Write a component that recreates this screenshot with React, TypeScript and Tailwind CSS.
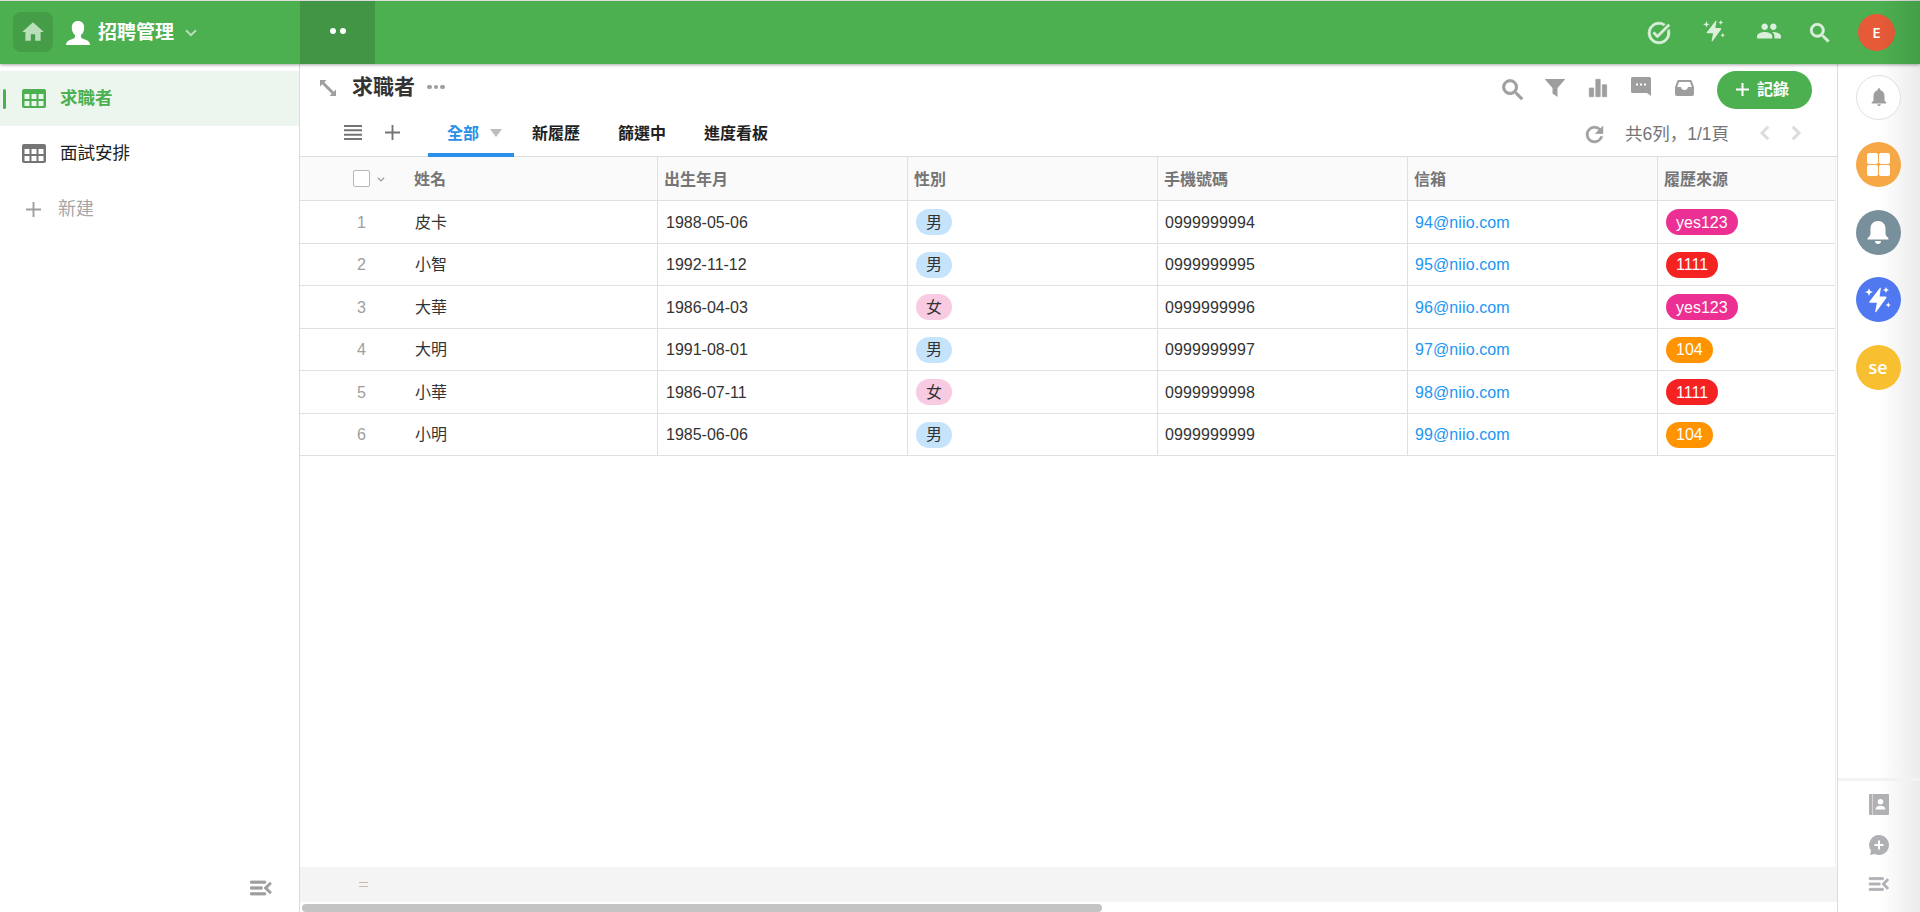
import type { ReactNode } from "react";
import clsx from "clsx";
import {
  MdChevronLeft,
  MdChevronRight,
  MdEqualizer,
  MdHome,
  MdMenuOpen,
  MdNotifications,
  MdPeople,
  MdRefresh,
  MdSearch,
  MdTaskAlt,
} from "react-icons/md";

type Row = {
  name: string;
  birth: string;
  gender: "男" | "女";
  phone: string;
  email: string;
  source: string;
};

const rows: Row[] = [
  { name: "皮卡", birth: "1988-05-06", gender: "男", phone: "0999999994", email: "94@niio.com", source: "yes123" },
  { name: "小智", birth: "1992-11-12", gender: "男", phone: "0999999995", email: "95@niio.com", source: "1111" },
  { name: "大華", birth: "1986-04-03", gender: "女", phone: "0999999996", email: "96@niio.com", source: "yes123" },
  { name: "大明", birth: "1991-08-01", gender: "男", phone: "0999999997", email: "97@niio.com", source: "104" },
  { name: "小華", birth: "1986-07-11", gender: "女", phone: "0999999998", email: "98@niio.com", source: "1111" },
  { name: "小明", birth: "1985-06-06", gender: "男", phone: "0999999999", email: "99@niio.com", source: "104" },
];

const sourceColor: Record<string, string> = {
  yes123: "bg-[#ec2f92]",
  "1111": "bg-[#f52222]",
  "104": "bg-[#ff9300]",
};

const columns = ["出生年月", "性別", "手機號碼", "信箱", "履歷來源"];

// thickens only the visible shape, the icons start with an empty bounding path
const heavy = "[&>path:last-child]:stroke-current [&>path:last-child]:stroke-[0.7]";

function Chevron({ className }: { className?: string }) {
  return (
    <svg viewBox="0 0 12 8" className={className} fill="none" stroke="currentColor" strokeWidth="2">
      <path d="M1 1.2l5 5 5-5" />
    </svg>
  );
}

function PlusIcon({ className }: { className?: string }) {
  return (
    <svg viewBox="0 0 16 16" className={className} fill="none" stroke="currentColor" strokeWidth="2">
      <path d="M8 0v16M0 8h16" />
    </svg>
  );
}

function TableIcon({ className }: { className?: string }) {
  return (
    <svg viewBox="0 0 24 19" className={clsx("h-[19px] w-6", className)} fill="currentColor" fillRule="evenodd">
      <path d="M2 0h20a2 2 0 0 1 2 2v15a2 2 0 0 1-2 2H2a2 2 0 0 1-2-2V2a2 2 0 0 1 2-2zM2.500 5v5h5V5zM9.500 5v5h5V5zM16.500 5v5h5V5zM2.500 12v5h5v-5zM9.500 12v5h5v-5zM16.500 12v5h5v-5z" />
    </svg>
  );
}

function BoltIcon({ className }: { className?: string }) {
  return (
    <svg viewBox="0 0 26 26" className={className} fill="currentColor">
      <path d="M15 .8c.5-.4 1 0 .8.6L14.600 9.600h6c.8 0 1.200.9.7 1.500L11.200 25c-.5.600-1.200.200-1-.500l1.700-8.700H5.200c-.8 0-1.200-.8-.7-1.400z" />
      <path d="M4 1.200l1.100 2.800 2.800 1.100-2.800 1.100L4 9 2.900 6.200.1 5.100 2.900 4zM21 0l.9 2.100 2.100.9-2.100.9L21 6l-.9-2.100L18 3l2.100-.9zM23.300 15.200l.8 2 1.900.8-1.900.8-.8 2-.8-2-1.900-.8 1.900-.8z" />
    </svg>
  );
}

function Header() {
  return (
    <header className="relative z-10 flex h-16 shrink-0 items-stretch border-t border-[#dcdcdc] bg-[#4caf50] text-white shadow-[0_1px_3px_rgba(0,0,0,0.35)]">
      <div className="flex w-[300px] items-center pl-[13px]">
        <button className="mb-px flex size-10 items-center justify-center rounded-lg bg-[#459d48] text-[#b9dfba]">
          <MdHome className="size-[26px]" />
        </button>
        <svg viewBox="0 0 24 24" className="ml-[13px] size-6" fill="currentColor">
          <path d="M12 0c3.800 0 6.200 2.500 6.200 6.500 0 3.300-1.200 6.200-3.200 7.500v2c.2 1.300 2 1.800 4.500 2.700 2.800 1 4.500 2.300 4.500 5.300H0c0-3 1.700-4.300 4.500-5.300C7 17.800 8.800 17.300 9 16v-2c-2-1.300-3.200-4.200-3.200-7.500C5.800 2.500 8.200 0 12 0z" />
        </svg>
        <span className="ml-2 text-[19px] leading-none font-bold">招聘管理</span>
        <Chevron className="ml-[11px] h-2 w-3 text-[#b9dfba]" />
      </div>
      <div className="flex w-[75px] items-center justify-center gap-1 bg-[#439546] pb-[3px]">
        <i className="size-1.5 rounded-full bg-white" />
        <i className="size-1.5 rounded-full bg-white" />
      </div>
      <div className="ml-auto flex items-center text-[#dbefdc]">
        <MdTaskAlt className={clsx("mr-[31px] size-[26px]", heavy)} />
        <BoltIcon className="mr-[31px] mb-1 size-[22px]" />
        <MdPeople className="mr-[25px] mb-[3px] size-[26px]" />
        <MdSearch className={clsx("mr-[25px] size-[26px]", heavy)} />
      </div>
      <div className="mr-[25px] flex size-[37px] items-center justify-center self-center rounded-full bg-[#e65a38] font-['Open_Sans',sans-serif] text-[15px] font-semibold">
        E
      </div>
    </header>
  );
}

function Sidebar() {
  return (
    <aside className="flex w-[300px] shrink-0 flex-col border-r border-[#dcdcdc] pt-[7px] text-[17.5px]">
      <div className="flex h-[55px] items-center bg-[#edf6ee] pl-[3px] font-bold text-[#4caf50]">
        <i className="h-5 w-[3px] rounded-full bg-[#4caf50]" />
        <TableIcon className="mr-3.5 ml-4" />
        <span>求職者</span>
      </div>
      <div className="flex h-[55px] items-center pl-[22px] text-[#212121]">
        <TableIcon className="mr-3.5 text-[#757575]" />
        <span>面試安排</span>
      </div>
      <div className="flex h-[55px] items-center pt-0.5 pl-[26px] text-[18px] text-[#a6a6a6]">
        <PlusIcon className="mr-[17px] size-[15px] text-[#9e9e9e]" />
        <span>新建</span>
      </div>
      <MdMenuOpen className={clsx("mt-auto mr-6 mb-2.5 size-7 self-end text-[#9e9e9e]", heavy)} />
    </aside>
  );
}

function TitleBar() {
  return (
    <div className="flex h-[48px] items-center pl-5 text-[#9e9e9e]">
      <svg viewBox="0 0 16 16" className="size-4" fill="currentColor">
        <path d="M0 0h6.500L4.300 2.200l9.500 9.500L16 9.500V16H9.500l2.200-2.200L2.200 4.300 0 6.500z" />
      </svg>
      <h1 className="ml-4 pb-1 text-[21px] leading-none font-bold text-[#333]">求職者</h1>
      <div className="mb-0.5 ml-3 flex gap-0.5">
        <i className="size-[4.500px] rounded-full bg-[#9e9e9e]" />
        <i className="size-[4.500px] rounded-full bg-[#9e9e9e]" />
        <i className="size-[4.500px] rounded-full bg-[#9e9e9e]" />
      </div>
      <div className="mr-[23px] ml-auto flex items-center">
        <MdSearch className={clsx("mt-1 mr-[18px] size-7", heavy)} />
        <svg viewBox="0 0 20 18" className="mr-5 h-[18px] w-5" fill="currentColor">
          <path d="M.5 0h19c.5 0 .6.500.3.800L12.500 9v9L7.500 14.500V9L.2.800C-.1.500 0 0 .5 0z" />
        </svg>
        <MdEqualizer className={clsx("mr-5 size-[26px]", heavy)} />
        <svg viewBox="0 0 20 19" className="mr-6 mb-1 h-[19px] w-5" fill="currentColor" fillRule="evenodd">
          <path d="M1.500 0h17A1.500 1.500 0 0 1 20 1.500V19l-4-3H1.500A1.500 1.500 0 0 1 0 14.500v-13A1.500 1.500 0 0 1 1.500 0zM5 6.500v2h2v-2zM9 6.500v2h2v-2zM13 6.500v2h2v-2z" />
        </svg>
        <svg viewBox="0 0 19 16" className="h-4 w-[19px]" fill="currentColor" fillRule="evenodd">
          <path d="M4 0h11c1 0 1.600.500 1.900 1.300L19 7v7a2 2 0 0 1-2 2H2a2 2 0 0 1-2-2V7l2.100-5.700C2.400.500 3 0 4 0zM4 2L2.200 7H6c.3 1.800 1.700 3 3.500 3S12.700 8.800 13 7h3.800L15 2z" />
        </svg>
      </div>
      <button className="mt-1 mr-[25px] flex h-[38px] w-[95px] items-center justify-center rounded-full bg-[#4caf50] pr-1 text-base font-bold text-white">
        <PlusIcon className="mr-2 mb-px size-[13px] stroke-[2.5]" />
        記錄
      </button>
    </div>
  );
}

function ViewTabs() {
  return (
    <div className="flex h-[45px] items-stretch border-b border-[#dedede] text-base font-bold text-[#212121]">
      <div className="flex items-center pb-[3px] pl-11 text-[#757575]">
        <svg viewBox="0 0 18 15" className="h-[15px] w-[18px]" stroke="currentColor" strokeWidth="2">
          <path d="M0 1h18M0 5.300h18M0 9.700h18M0 14h18" />
        </svg>
        <PlusIcon className="mr-7 ml-[23px] size-[15px]" />
      </div>
      <div className="-mb-px flex w-[86px] items-center border-b-4 border-[#2a8fe8] pt-0.5 pl-[19px] text-[#2a8fe8]">
        全部
        <svg viewBox="0 0 12 8" className="mb-0.5 ml-[11px] h-2 w-3" fill="#bdbdbd">
          <path d="M0 0h12L6 8z" />
        </svg>
      </div>
      <div className="flex items-center gap-[38px] pb-px pl-[18px]">
        <span>新履歷</span>
        <span>篩選中</span>
        <span>進度看板</span>
      </div>
      <div className="mr-[27px] ml-auto flex items-center font-normal text-[#757575]">
        <MdRefresh className={clsx("mr-[18px] size-[25px] text-[#9e9e9e]", heavy)} />
        <span className="pt-px font-['Liberation_Sans','Noto_Sans_CJK_SC',sans-serif] text-[17.500px]">
          共6列，1/1頁
        </span>
        <MdChevronLeft className={clsx("mb-[3px] ml-[22px] size-7 text-[#dcdcdc]", heavy)} />
        <MdChevronRight className={clsx("mb-[3px] ml-[3px] size-7 text-[#dcdcdc]", heavy)} />
      </div>
    </div>
  );
}

function Cell({ children, className }: { children: ReactNode; className?: string }) {
  return <div className={clsx("flex items-center border-l border-[#e0e0e0]", className)}>{children}</div>;
}

const grid = "grid grid-cols-[357px_250px_250px_250px_250px_1fr] border-b border-[#e0e0e0]";

function DataTable() {
  return (
    <div className="mr-px flex-1 border-r border-[#efefef] text-base text-[#333]">
      <div className={clsx(grid, "h-11 bg-[#fafafa] font-bold text-[#757575]")}>
        <div className="flex items-center pl-[53px]">
          <i className="size-[17px] rounded-xs border border-[#bcb5b3] bg-white" />
          <Chevron className="mt-0.5 ml-[7px] h-[5px] w-2 text-[#9e9e9e]" />
          <span className="mt-0.5 ml-[29px]">姓名</span>
        </div>
        {columns.map((c) => (
          <Cell key={c} className="pt-0.5 pl-1.5">
            {c}
          </Cell>
        ))}
      </div>
      {rows.map((row, i) => (
        <div key={row.phone} className={clsx(grid, "h-[42.500px]")}>
          <div className="flex items-center pt-0.5">
            <span className="w-[123px] text-center text-[#9e9e9e]">{i + 1}</span>
            <span className="-ml-2">{row.name}</span>
          </div>
          <Cell className="pt-0.5 pl-2">{row.birth}</Cell>
          <Cell className="pt-px pl-2">
            <span
              className={clsx(
                "flex h-[26px] w-9 items-center justify-center rounded-full pt-px",
                row.gender === "男" ? "bg-[#c5e3fb]" : "bg-[#f9cbe3]",
              )}
            >
              {row.gender}
            </span>
          </Cell>
          <Cell className="pt-0.5 pl-[7px] tracking-[0.1px]">{row.phone}</Cell>
          <Cell className="pt-0.5 pl-[7px] tracking-[0.1px] text-[#2196f3]">{row.email}</Cell>
          <Cell className="pt-px pl-2">
            <span
              className={clsx("flex h-[26px] items-center rounded-full px-2.5 pt-px text-white", sourceColor[row.source])}
            >
              {row.source}
            </span>
          </Cell>
        </div>
      ))}
    </div>
  );
}

function RightRail() {
  return (
    <aside className="flex w-[83px] shrink-0 flex-col border-l border-[#dcdcdc] bg-linear-to-r from-white from-50% to-[#ebebeb] text-white">
      <div className="flex flex-col items-center gap-[22.500px] pt-[10.500px] pr-0.5">
        <div className="flex size-[45px] items-center justify-center rounded-full border border-[#e0e0e0] bg-white pl-px text-[#9e9e9e]">
          <MdNotifications className="size-[22px]" />
        </div>
        <div className="flex size-[45px] items-center justify-center rounded-full bg-[#f5a845]">
          <div className="grid grid-cols-2 gap-px">
            <i className="size-[11px] rounded-[2px] bg-white" />
            <i className="size-[11px] rounded-[2px] bg-white" />
            <i className="size-[11px] rounded-[2px] bg-white" />
            <i className="size-[11px] rounded-[2px] bg-white" />
          </div>
        </div>
        <div className="flex size-[45px] items-center justify-center rounded-full bg-[#78909c]">
          <svg viewBox="0 0 22 23" className="h-[23px] w-[22px]" fill="currentColor">
            <path d="M11 0c4.500 0 7.500 3.300 7.500 7.500V13c0 2 3 3.500 3 5v.500H.5V18c0-1.500 3-3 3-5V7.500C3.500 3.300 6.500 0 11 0zM8 20h6c0 1.800-1.300 3-3 3s-3-1.200-3-3z" />
          </svg>
        </div>
        <div className="flex size-[45px] items-center justify-center rounded-full bg-[#5078f0]">
          <BoltIcon className="size-[26px]" />
        </div>
        <div className="flex size-[45px] items-center justify-center rounded-full bg-[#f8bf30] pb-px font-['Open_Sans',sans-serif] text-lg font-semibold">
          se
        </div>
      </div>
      <div className="mt-auto flex h-[134px] flex-col items-center border-t-[3px] border-[#f2f2f2] pt-[13px] text-[#b0b1b5]">
        <svg viewBox="0 0 20 21" className="h-[21px] w-5" fill="currentColor" fillRule="evenodd">
          <path d="M1 0h18a1 1 0 0 1 1 1v19a1 1 0 0 1-1 1H1a1 1 0 0 1-1-1V1a1 1 0 0 1 1-1zM11.500 5a2.500 2.500 0 1 0 0 5.500 2.500 2.500 0 0 0 0-5.500zM6.500 15.500h10c0-2.500-2-3.800-5-3.800s-5 1.300-5 3.800z" />
          <path d="M3.500 0v21" stroke="#e4dcda" strokeWidth="0.8" />
        </svg>
        <svg viewBox="0 0 20 20" className="mt-5 size-5" fill="currentColor">
          <path d="M10 0a10 10 0 1 1-4.200 19.100L1 20l1-4.200A10 10 0 0 1 10 0z" />
          <path d="M10 5.500v9M5.500 10h9" stroke="white" strokeWidth="2" />
        </svg>
        <MdMenuOpen className={clsx("mt-4 size-[26px]", heavy)} />
      </div>
    </aside>
  );
}

export default function App() {
  return (
    <div className="relative flex h-screen flex-col overflow-hidden bg-white font-['Liberation_Sans','Noto_Sans_CJK_TC',sans-serif]">
      <Header />
      <div className="flex min-h-0 flex-1">
        <Sidebar />
        <main className="flex min-w-0 flex-1 flex-col">
          <TitleBar />
          <ViewTabs />
          <DataTable />
          <div className="flex h-[35px] items-center bg-[#f4f4f4] pl-[59px]">
            <i className="h-[5px] w-[9px] border-y border-[#cbb9b4]" />
          </div>
          <div className="h-2.5 pt-0.5 pl-0.5">
            <div className="h-2 w-[800px] rounded-full bg-[#c4c4c4]" />
          </div>
        </main>
        <RightRail />
      </div>
      {/* soft shade on the right end of the header */}
      <div className="pointer-events-none absolute top-0 right-0 z-20 h-16 w-10 bg-linear-to-r from-transparent to-black/10" />
    </div>
  );
}
